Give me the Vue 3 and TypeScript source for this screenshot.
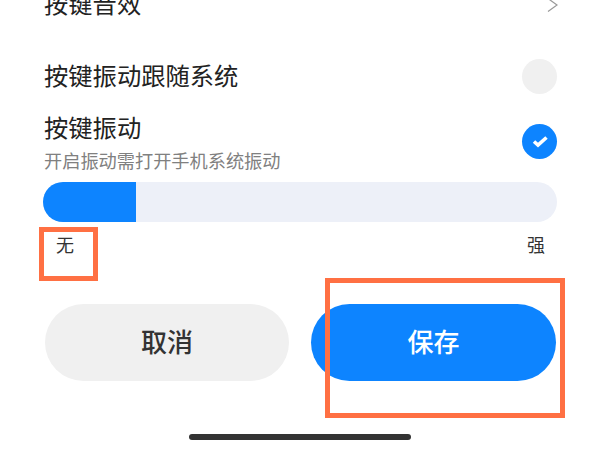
<script setup lang="ts">
const subtitle: string = "开启振动需打开手机系统振动";
</script>

<template>
  <div class="screen">
    <div class="row sound">
      <span class="title">按键音效</span>
      <svg class="chev" width="12" height="16" viewBox="0 0 12 16"><path d="M2 1.5 L11 8 L2 14.5" fill="none" stroke="#999" stroke-width="1.2" /></svg>
    </div>
    <div class="row follow">
      <span class="title lift">按键振动跟随系统</span>
      <span class="circle off"></span>
    </div>
    <div class="row vibrate">
      <div class="stack">
        <span class="title">按键振动</span>
        <span class="sub">{{ subtitle }}</span>
      </div>
      <span class="circle on">
        <svg width="35" height="35" viewBox="0 0 35 35"><path d="M12 17.5 L16 21 L24.5 13.5" fill="none" stroke="#fff" stroke-width="3.6" /></svg>
      </span>
    </div>
    <div class="track"><div class="fill"></div></div>
    <div class="labels">
      <span class="mark-wrap"><span>无</span><i class="mark mark-a"></i></span>
      <span class="strong">强</span>
    </div>
    <div class="buttons">
      <button class="btn cancel">取消</button>
      <span class="save-wrap">
        <button class="btn save">保存</button>
        <i class="mark mark-b"></i>
      </span>
    </div>
    <div class="home"></div>
  </div>
</template>

<style scoped>
.screen {
  width: 600px;
  height: 450px;
  box-sizing: border-box;
  padding: 0 43px 0 43px;
  overflow: hidden;
  background: #fff;
  display: flex;
  flex-direction: column;
  font-family: "Noto Sans CJK SC", "Noto Sans", sans-serif;
  color: #222;
}
.row {
  display: flex;
  align-items: center;
  justify-content: space-between;
  flex: none;
}
.title {
  font-size: 24.3px;
  line-height: 30px;
  padding-left: 1px;
}
.lift {
  margin-bottom: 4px;
}
.sound {
  height: 30px;
  margin-top: -12px;
}
.chev {
  margin-right: -1px;
  margin-top: 4px;
}
.follow {
  height: 35px;
  margin-top: 41px;
}
.vibrate {
  margin-top: 24px;
  height: 56px;
  align-items: flex-start;
}
.stack {
  display: flex;
  flex-direction: column;
  margin-top: -6px;
}
.sub {
  font-size: 18.2px;
  line-height: 26px;
  margin-top: 5px;
  color: #808080;
  padding-left: 1px;
}
.circle {
  width: 35px;
  height: 35px;
  border-radius: 50%;
  display: block;
}
.off {
  background: #f0f0f0;
}
.on {
  background: #0d84ff;
  margin-top: 6px;
}
.on svg {
  display: block;
}
.track {
  flex: none;
  height: 40px;
  margin-top: 8px;
  border-radius: 20px;
  background: #edf0f8;
  overflow: hidden;
}
.fill {
  width: 93px;
  height: 100%;
  background: #0d84ff;
}
.labels {
  flex: none;
  display: flex;
  justify-content: space-between;
  height: 40px;
  margin-top: 10px;
  font-size: 18px;
  line-height: 24px;
  color: #333;
}
.mark-wrap {
  position: relative;
  margin-left: 13px;
}
.strong {
  margin-right: 12px;
}
.mark {
  position: absolute;
  box-sizing: border-box;
  border: 5px solid #ff7043;
  display: block;
}
.mark-a {
  left: -17px;
  top: -5px;
  width: 59px;
  height: 54px;
}
.buttons {
  flex: none;
  display: flex;
  justify-content: space-between;
  margin-top: 32px;
  padding: 0 1px 0 2px;
}
.btn {
  width: 245px;
  height: 77px;
  border: 0;
  border-radius: 39px;
  font-family: inherit;
  font-size: 26px;
  font-weight: 500;
  padding: 0 0 4px;
}
.cancel {
  width: 244px;
  background: #f0f0f0;
  color: #333;
}
.save {
  background: #0d84ff;
  color: #fff;
  display: block;
}
.save-wrap {
  position: relative;
}
.mark-b {
  left: 14px;
  top: -26px;
  width: 240px;
  height: 140px;
}
.home {
  flex: none;
  width: 222px;
  height: 6px;
  border-radius: 3px;
  background: #333;
  margin: 53px auto 0;
}
</style>
